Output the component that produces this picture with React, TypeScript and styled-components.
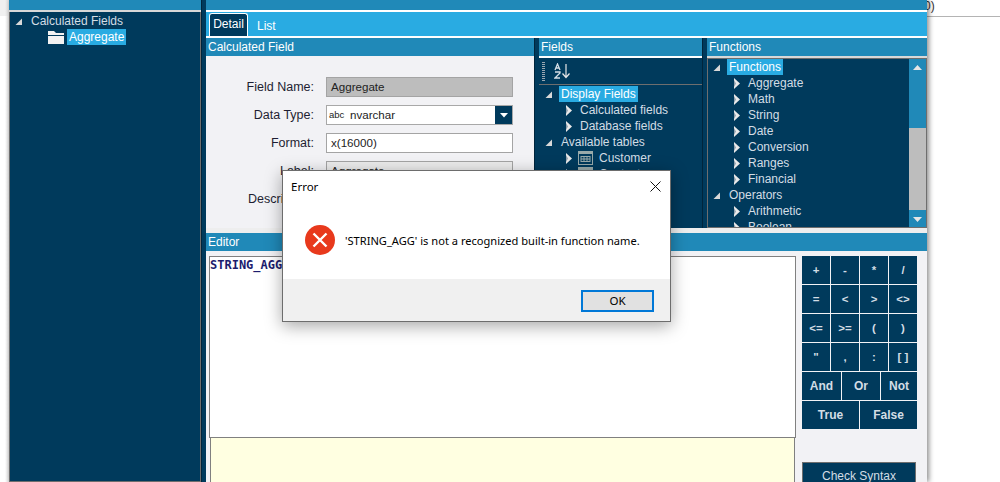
import React from "react";
import styled, { createGlobalStyle } from "styled-components";

const Global = createGlobalStyle`
  html, body { margin: 0; padding: 0; height: 482px; overflow: hidden; background: #fff; }
  * { box-sizing: border-box; }
  body { font-family: "Liberation Sans", Arial, sans-serif; font-size: 12px; }
`;

const Page = styled.div`
  position: relative; display: flex; width: 1000px; height: 482px; overflow: hidden; background: #fff;
`;
const LeftGutter = styled.div`
  width: 9px; background: linear-gradient(90deg, transparent 5px, #dcdcdc 100%), linear-gradient(180deg, #f0f0f0 16px, #fff 16px);
`;
const WindowFrame = styled.div`
  display: flex; width: 918px; height: 482px; background: #003a5c; box-shadow: 2px 0 5px rgba(0,0,0,.45); position: relative; z-index: 1;
`;
const RightBlank = styled.div`
  flex: 1; height: 17px; border-bottom: 1px solid #b4b4b4; font-size: 12px; line-height: 13px; color: #333; white-space: nowrap; overflow: hidden;
`;
const ClippedText = styled.span`
  display: block; margin-left: -3px;
`;
const TreePane = styled.div`
  width: 192px; display: flex; flex-direction: column;
`;
const HeaderBand = styled.div`
  height: 10px; background: #2089b8; flex: none;
`;
const LightRule = styled.div`
  height: 2px; background: #d8d8d8; flex: none;
`;
const TreeBody = styled.div`
  flex: 1; border: 1px solid #6e6e6e; border-top: 0; background: #003a5c; padding-top: 1px; overflow: hidden;
`;
const Splitter = styled.div`
  width: 5px; flex: none; background: #003a5c; border-left: 1px solid #00253c;
`;
const MainPane = styled.div`
  flex: 1; display: flex; flex-direction: column; background: #f2f2f5; min-width: 0;
`;
const WhiteRule = styled.div`
  height: 2px; background: #fff; flex: none;
`;
const TabBar = styled.div`
  height: 24px; background: #29abe2; display: flex; align-items: flex-end; padding-left: 3px; flex: none;
`;
const ActiveTab = styled.div`
  width: 39px; height: 23px; background: #003a5c; border: 1px solid #fff; border-bottom: 0; border-radius: 3px 3px 0 0; color: #fff; text-align: center; line-height: 21px; font-size: 12px;
`;
const PlainTab = styled.div`
  margin-left: 9px; color: #fff; font-size: 12px; line-height: 20px; height: 20px;
`;
const TopSection = styled.div`
  display: flex; height: 190px; flex: none;
`;
const FormPanel = styled.div`
  width: 328px; display: flex; flex-direction: column; background: #f2f2f5; overflow: hidden;
`;
const SectionHeader = styled.div`
  height: 18px; flex: none; background: #2089b8; color: #fff; font-size: 12px; line-height: 18px; padding-left: 2px; white-space: nowrap;
`;
const FormGrid = styled.div`
  display: grid; grid-template-columns: 108px 187px; column-gap: 12px; row-gap: 8px; padding-top: 21px; grid-auto-rows: 20px;
`;
const FieldLabel = styled.div`
  text-align: right; color: #1e1e32; font-size: 12.5px; line-height: 20px; white-space: nowrap;
`;
const TextInput = styled.div<{ $bg?: string }>`
  height: 20px; border: 1px solid #a4a4a4; background: ${p => p.$bg || "#fff"}; color: #222; font-size: 11.6px; line-height: 18px; padding-left: 4px; white-space: nowrap; overflow: hidden;
`;
const ComboInput = styled.div`
  height: 20px; border: 1px solid #a8a8a8; background: #fff; color: #222; font-size: 11.6px; line-height: 18px; padding-left: 2px; display: flex;
`;
const ComboPrefix = styled.span`
  font-size: 9.5px; margin-right: 6px; color: #222; width: 15px;
`;
const ComboText = styled.span`
  flex: 1;
`;
const ComboButton = styled.div`
  width: 17px; background: #003a5c; display: flex; align-items: center; justify-content: center;
`;
const ColumnPanel = styled.div<{ $w: number }>`
  width: ${p => p.$w}px; display: flex; flex-direction: column; background: #003a5c; overflow: hidden; flex: none;
`;
const Sorter = styled.div`
  height: 27px; flex: none; background: #003a5c; border-bottom: 1px solid #6e6e6e; display: flex; align-items: center; padding-left: 3px; gap: 9px;
`;
const Grip = styled.div`
  width: 3px; height: 19px; background: repeating-linear-gradient(180deg, #9aa7b2 0 1px, transparent 1px 2px);
`;
const FieldTree = styled.div`
  flex: 1; padding-top: 1px; overflow: hidden;
`;
const FnFrame = styled.div`
  display: flex; height: 170px; border: 1px solid #6e6e6e; flex: none; overflow: hidden; background: #003a5c;
`;
const FnTree = styled.div`
  flex: 1; overflow: hidden; padding-top: 0;
`;
const ScrollTrack = styled.div`
  width: 17px; display: flex; flex-direction: column; flex: none;
`;
const ScrollUp = styled.div`
  height: 69px; background: #2089b8; display: flex; justify-content: center; padding-top: 6px;
`;
const ScrollThumb = styled.div`
  height: 82px; background: #bdbdbd;
`;
const ScrollDown = styled.div`
  flex: 1; background: #2089b8; display: flex; justify-content: center; padding-top: 7px;
`;
const TreeRow = styled.div<{ $level: number }>`
  height: 16px; display: flex; align-items: center; color: #d3dde5; font-size: 12px; white-space: nowrap; padding-left: ${p => p.$level}px; flex: none;
`;
const RowLabel = styled.span<{ $selected?: boolean }>`
  padding: 0 2px; height: 16px; line-height: 16px; background: ${p => (p.$selected ? "#29abe2" : "transparent")}; color: ${p => (p.$selected ? "#fff" : "#d3dde5")};
`;
const SectionGap = styled.div`
  height: 5px; background: #eee; flex: none;
`;
const EditorArea = styled.div`
  flex: 1; display: flex; padding: 5px 10px 0 3px; gap: 6px; min-height: 0; overflow: hidden;
`;
const EditorColumn = styled.div`
  width: 587px; display: flex; flex-direction: column;
`;
const CodeBox = styled.div`
  height: 182px; border: 1px solid #808080; background: #fff; color: #1c1c6e; font: bold 12px/14px "DejaVu Sans Mono", monospace; padding: 1px 0; flex: none;
`;
const HintBox = styled.div`
  flex: 1; margin-left: 1px; width: 585px; border: 1px solid #808080; border-top: 0; border-bottom: 0; background: #ffffe1;
`;
const SideColumn = styled.div`
  width: 115px; display: flex; flex-direction: column; flex: none;
`;
const KeyRow = styled.div<{ $cols: string }>`
  display: grid; grid-template-columns: ${p => p.$cols}; column-gap: 1px; height: 28px; margin-bottom: 1px; flex: none;
`;
const Key = styled.div<{ $big?: boolean }>`
  background: #003a5c; color: #d3dde5; font-weight: bold; font-size: ${p => (p.$big ? 12 : 11.5)}px; display: flex; align-items: center; justify-content: center;
`;
const CheckButton = styled.div`
  margin-top: 32px; height: 40px; width: 114px; background: #003a5c; border: 1px solid #6e6e6e; color: #d3dde5; font-size: 12px; line-height: 14px; text-align: center; padding-top: 6px; flex: none;
`;
const Dialog = styled.div`
  position: absolute; left: 282px; top: 170px; width: 389px; height: 152px; z-index: 5; background: #fff; border: 1px solid #6d6d6d; box-shadow: 0 4px 16px rgba(0,0,0,.35); display: flex; flex-direction: column; font-family: "Noto Sans", sans-serif; color: #000; font-size: 11.1px;
`;
const DialogTitle = styled.div`
  height: 30px; display: flex; align-items: center; justify-content: space-between; padding: 0 9px 0 8px; flex: none; font-size: 11.5px;
`;
const DialogBody = styled.div`
  flex: 1; display: flex; align-items: center; gap: 10px; padding: 0 0 0 22px; background: #fff;
`;
const DialogFooter = styled.div`
  height: 42px; flex: none; background: #f0f0f0; display: flex; justify-content: flex-end; align-items: flex-start; padding: 11px 16px 0 0;
`;
const OkButton = styled.div`
  width: 73px; height: 22px; border: 2px solid #0078d7; background: #e1e1e1; text-align: center; line-height: 18px; color: #000; font-size: 11.5px;
`;

const Down = () => (
  <svg width="9" height="9" viewBox="0 0 9 9"><polygon points="8,1.5 8,8 1.5,8" fill="#d8d8d8" /></svg>
);
const Right = () => (
  <svg width="7" height="11" viewBox="0 0 7 11"><polygon points="0,0 6,5.5 0,11" fill="#eaeaea" /><polygon points="0,2 2,5.5 0,9" fill="#8fa0ad" /></svg>
);
const Slot = styled.span<{ $nudge?: number }>`
  display: inline-flex; width: 15px; flex: none; align-items: center; padding-left: ${p => p.$nudge || 0}px;
`;
const TableIcon = () => (
  <svg width="15" height="14" viewBox="0 0 15 14" style={{ marginRight: 4, flex: "none" }}>
    <rect x=".5" y=".5" width="14" height="13" fill="none" stroke="#9aa" />
    <rect x="1" y="1" width="13" height="2" fill="#9aa" />
    <path d="M3 5.5h9M3 8h9M3 10.5h9M3 5v6M6 5v6M9 5v6M12 5v6" stroke="#9aa" strokeWidth="1" fill="none" />
  </svg>
);
const FolderIcon = () => (
  <svg width="16" height="13" viewBox="0 0 16 13" style={{ flex: "none", marginRight: 3 }}>
    <path d="M0 0h6l2 2h8v2H0z" fill="#f2f2f2" /><rect y="5" width="16" height="8" fill="#f2f2f2" />
  </svg>
);
const SortIcon = () => (
  <svg width="18" height="16" viewBox="0 0 18 16">
    <path d="M1 7l2.5-6 2.5 6M2 5h3M1 9h5v1l-5 5h5" stroke="#d3dde5" strokeWidth="1.3" fill="none" />
    <path d="M12 1v13M8.5 10.5l3.5 4 3.5-4" stroke="#e6e6e6" strokeWidth="1.2" fill="none" />
  </svg>
);

const keys: [string, string[], boolean?][] = [
  ["28px 28px 28px 28px", ["+", "-", "*", "/"]],
  ["28px 28px 28px 28px", ["=", "<", ">", "<>"]],
  ["28px 28px 28px 28px", ["<=", ">=", "(", ")"]],
  ["28px 28px 28px 28px", ['"', ",", ":", "[ ]"]],
  ["39px 38px 36px", ["And", "Or", "Not"], true],
  ["57px 57px", ["True", "False"], true],
];

const Branch = ({ level, label, selected, open }: { level: number; label: string; selected?: boolean; open?: boolean }) => (
  <TreeRow $level={level}>
    <Slot $nudge={open ? 0 : 3}>{open ? <Down /> : <Right />}</Slot>
    <RowLabel $selected={selected}>{label}</RowLabel>
  </TreeRow>
);

export default function App() {
  return (
    <Page>
      <Global />
      <LeftGutter />
      <WindowFrame>
        <TreePane>
          <HeaderBand />
          <LightRule />
          <TreeBody>
            <Branch level={4} label="Calculated Fields" open />
            <TreeRow $level={38}>
              <FolderIcon />
              <RowLabel $selected>Aggregate</RowLabel>
            </TreeRow>
          </TreeBody>
        </TreePane>
        <Splitter />
        <MainPane>
          <HeaderBand />
          <WhiteRule />
          <TabBar>
            <ActiveTab>Detail</ActiveTab>
            <PlainTab>List</PlainTab>
          </TabBar>
          <WhiteRule />
          <TopSection>
            <FormPanel>
              <SectionHeader>Calculated Field</SectionHeader>
              <FormGrid>
                <FieldLabel>Field Name:</FieldLabel>
                <TextInput $bg="#bdbdbd">Aggregate</TextInput>
                <FieldLabel>Data Type:</FieldLabel>
                <ComboInput>
                  <ComboPrefix>abc</ComboPrefix>
                  <ComboText>nvarchar</ComboText>
                  <ComboButton>
                    <svg width="8" height="5" viewBox="0 0 8 5"><polygon points="0,0 8,0 4,4.5" fill="#fff" /></svg>
                  </ComboButton>
                </ComboInput>
                <FieldLabel>Format:</FieldLabel>
                <TextInput>x(16000)</TextInput>
                <FieldLabel>Label:</FieldLabel>
                <TextInput $bg="#ececec">Aggregate</TextInput>
                <FieldLabel>Description:</FieldLabel>
                <TextInput />
              </FormGrid>
            </FormPanel>
            <Splitter />
            <ColumnPanel $w={163}>
              <SectionHeader>Fields</SectionHeader>
              <WhiteRule />
              <Sorter><Grip /><SortIcon /></Sorter>
              <FieldTree>
                <Branch level={5} label="Display Fields" selected open />
                <Branch level={24} label="Calculated fields" />
                <Branch level={24} label="Database fields" />
                <Branch level={5} label="Available tables" open />
                <TreeRow $level={24}><Slot $nudge={3}><Right /></Slot><TableIcon /><RowLabel>Customer</RowLabel></TreeRow>
                <TreeRow $level={24}><Slot $nudge={3}><Right /></Slot><TableIcon /><RowLabel>Contact</RowLabel></TreeRow>
              </FieldTree>
            </ColumnPanel>
            <Splitter />
            <ColumnPanel $w={220}>
              <SectionHeader>Functions</SectionHeader>
              <LightRule />
              <FnFrame>
                <FnTree>
                  <Branch level={4} label="Functions" selected open />
                  {["Aggregate", "Math", "String", "Date", "Conversion", "Ranges", "Financial"].map(n => (
                    <Branch key={n} level={23} label={n} />
                  ))}
                  <Branch level={4} label="Operators" open />
                  <Branch level={23} label="Arithmetic" />
                  <Branch level={23} label="Boolean" />
                </FnTree>
                <ScrollTrack>
                  <ScrollUp>
                    <svg width="9" height="5" viewBox="0 0 9 5"><polygon points="0,5 9,5 4.5,0" fill="#e6e6e6" /></svg>
                  </ScrollUp>
                  <ScrollThumb />
                  <ScrollDown>
                    <svg width="9" height="5" viewBox="0 0 9 5"><polygon points="0,0 9,0 4.5,5" fill="#e6e6e6" /></svg>
                  </ScrollDown>
                </ScrollTrack>
              </FnFrame>
            </ColumnPanel>
          </TopSection>
          <SectionGap />
          <SectionHeader>Editor</SectionHeader>
          <EditorArea>
            <EditorColumn>
              <CodeBox>STRING_AGG</CodeBox>
              <HintBox />
            </EditorColumn>
            <SideColumn>
              {keys.map(([cols, items, big], i) => (
                <KeyRow key={i} $cols={cols}>
                  {items.map(k => <Key key={k} $big={big}>{k}</Key>)}
                </KeyRow>
              ))}
              <CheckButton>Check Syntax</CheckButton>
            </SideColumn>
          </EditorArea>
        </MainPane>
      </WindowFrame>
      <RightBlank><ClippedText>0)</ClippedText></RightBlank>
      <Dialog>
        <DialogTitle>
          <span>Error</span>
          <svg width="11" height="11" viewBox="0 0 11 11"><path d="M.5.5l10 10M10.5.5l-10 10" stroke="#111" strokeWidth="1" fill="none" /></svg>
        </DialogTitle>
        <DialogBody>
          <svg width="30" height="30" viewBox="0 0 30 30" style={{ flex: "none" }}>
            <circle cx="15" cy="15" r="15" fill="#e8391c" />
            <path d="M8.5 8.5l13 13M21.5 8.5l-13 13" stroke="#fff" strokeWidth="2.4" fill="none" />
          </svg>
          <span>'STRING_AGG' is not a recognized built-in function name.</span>
        </DialogBody>
        <DialogFooter><OkButton>OK</OkButton></DialogFooter>
      </Dialog>
    </Page>
  );
}
